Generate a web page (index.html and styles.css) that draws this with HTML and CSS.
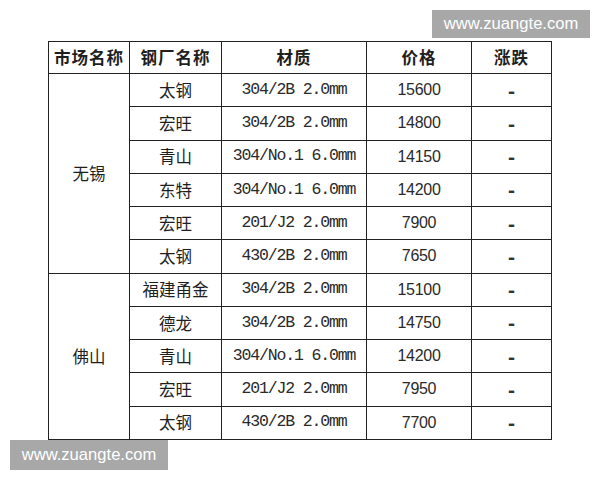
FILE: index.html
```html
<!DOCTYPE html>
<html lang="zh">
<head>
<meta charset="utf-8">
<link rel="stylesheet" href="styles.css">
</head>
<body>
<div class="page">
  <table class="price-table">
    <colgroup>
      <col class="c-market"><col class="c-mill"><col class="c-grade"><col class="c-price"><col class="c-change">
    </colgroup>
    <thead>
      <tr><th>市场名称</th><th>钢厂名称</th><th>材质</th><th>价格</th><th>涨跌</th></tr>
    </thead>
    <tbody>
      <tr><td class="market" rowspan="6">无锡</td><td class="mill">太钢</td><td class="grade">304/2B 2.0mm</td><td class="price">15600</td><td class="change">-</td></tr>
      <tr><td class="mill">宏旺</td><td class="grade">304/2B 2.0mm</td><td class="price">14800</td><td class="change">-</td></tr>
      <tr><td class="mill">青山</td><td class="grade">304/No.1 6.0mm</td><td class="price">14150</td><td class="change">-</td></tr>
      <tr><td class="mill">东特</td><td class="grade">304/No.1 6.0mm</td><td class="price">14200</td><td class="change">-</td></tr>
      <tr><td class="mill">宏旺</td><td class="grade">201/J2 2.0mm</td><td class="price">7900</td><td class="change">-</td></tr>
      <tr><td class="mill">太钢</td><td class="grade">430/2B 2.0mm</td><td class="price">7650</td><td class="change">-</td></tr>
      <tr><td class="market" rowspan="5">佛山</td><td class="mill">福建甬金</td><td class="grade">304/2B 2.0mm</td><td class="price">15100</td><td class="change">-</td></tr>
      <tr><td class="mill">德龙</td><td class="grade">304/2B 2.0mm</td><td class="price">14750</td><td class="change">-</td></tr>
      <tr><td class="mill">青山</td><td class="grade">304/No.1 6.0mm</td><td class="price">14200</td><td class="change">-</td></tr>
      <tr><td class="mill">宏旺</td><td class="grade">201/J2 2.0mm</td><td class="price">7950</td><td class="change">-</td></tr>
      <tr><td class="mill">太钢</td><td class="grade">430/2B 2.0mm</td><td class="price">7700</td><td class="change">-</td></tr>
    </tbody>
  </table>
  <div class="watermark wm-top">www.zuangte.com</div>
  <div class="watermark wm-bottom">www.zuangte.com</div>
</div>
</body>
</html>
```

FILE: styles.css
```css
html, body {
  margin: 0;
  padding: 0;
  background: #ffffff;
}

.page {
  position: relative;
  width: 600px;
  height: 480px;
  padding: 41px 0 0 48px;
  box-sizing: border-box;
}

.price-table {
  border-collapse: collapse;
  table-layout: fixed;
  width: 504px;
  color: #1e1e1e;
  font-family: "Noto Sans CJK SC", "Liberation Sans", sans-serif;
}

.c-market { width: 81px; }
.c-mill { width: 92px; }
.c-grade { width: 145px; }
.c-price { width: 105px; }
.c-change { width: 80px; }

.price-table th,
.price-table td {
  border: 1.5px solid #222222;
  padding: 0;
  text-align: center;
  vertical-align: middle;
  white-space: nowrap;
  line-height: 1;
}

.price-table th {
  height: 31px;
  font-size: 16.5px;
  font-weight: 700;
  letter-spacing: 1px;
}

.price-table td {
  height: 32.25px;
  font-size: 16.5px;
}

.price-table .grade {
  font-family: "Liberation Mono", monospace;
  font-size: 16.5px;
  letter-spacing: -1.15px;
  color: #2a2a2a;
}

.price-table .price {
  font-family: "Liberation Sans", Arial, sans-serif;
  font-size: 16px;
  letter-spacing: -0.3px;
  color: #2a2a2a;
}

.price-table .change {
  font-family: "Liberation Sans", Arial, sans-serif;
  font-size: 21px;
  font-weight: 700;
  color: #333333;
}

.watermark {
  position: absolute;
  background: #a8a8a8;
  color: #ffffff;
  font-family: "Liberation Sans", Arial, sans-serif;
  font-size: 16.6px;
  display: flex;
  align-items: center;
  justify-content: center;
}

.wm-top {
  left: 432px;
  top: 10px;
  width: 158px;
  height: 28px;
}

.wm-bottom {
  left: 10px;
  top: 440px;
  width: 158px;
  height: 30px;
}
```
